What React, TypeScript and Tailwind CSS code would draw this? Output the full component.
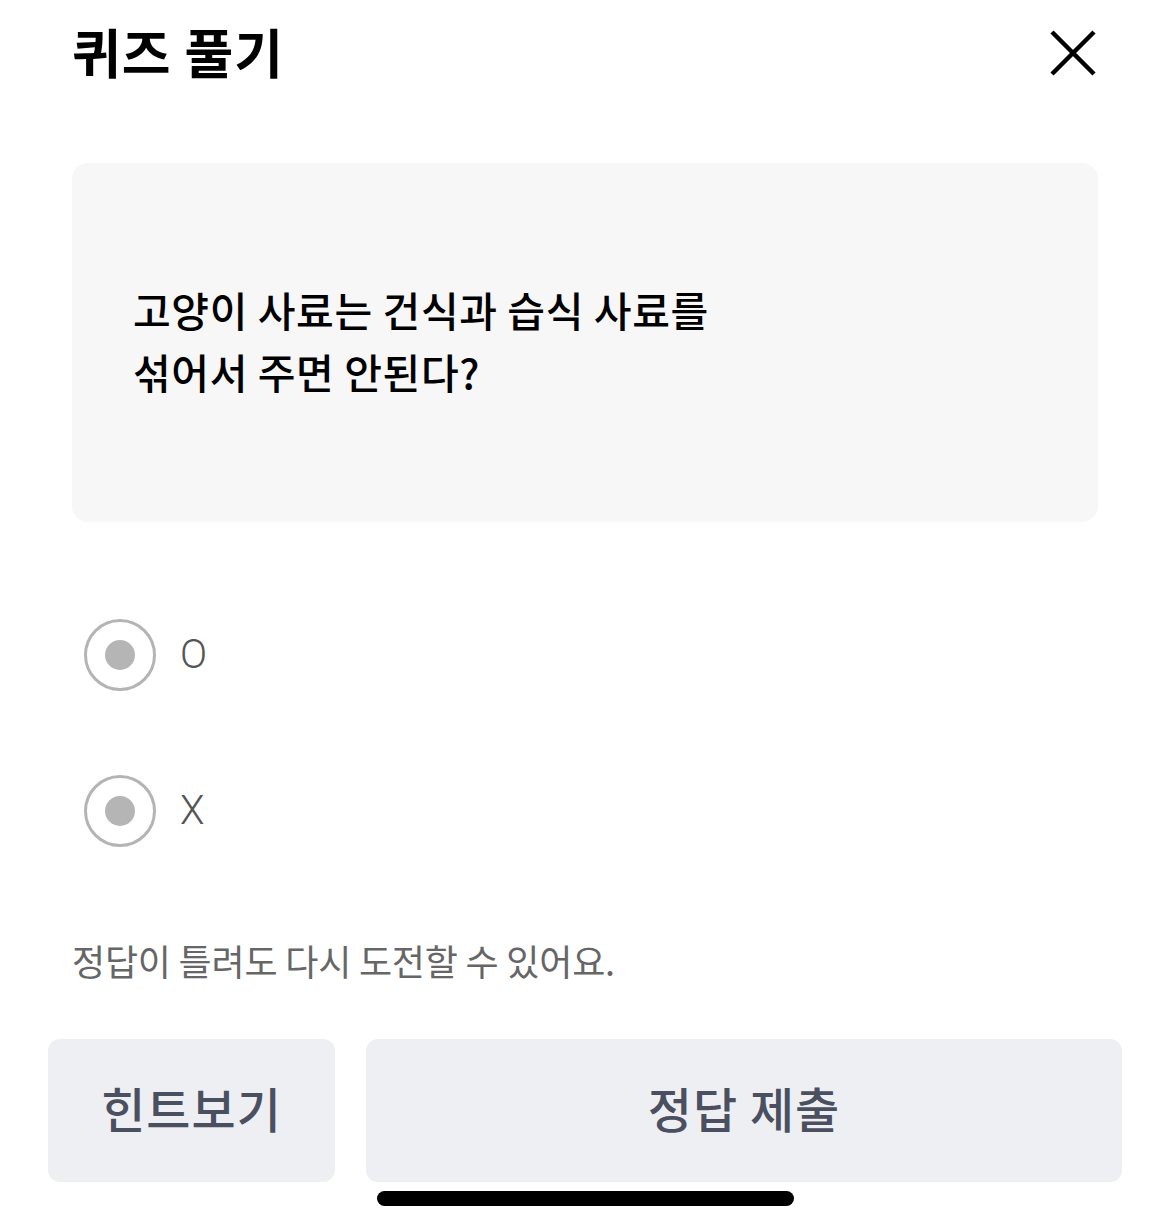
import React from "react";

const KR = { fontFamily: '"Noto Sans CJK KR", "Noto Sans", sans-serif' };
const RB = { fontFamily: 'Roboto, "Noto Sans", sans-serif' };

function Radio({ label }: { label: string }) {
  return (
    <div className="flex items-center h-[72px]">
      <div className="w-[72px] h-[72px] rounded-full border-[3px] border-[#b4b4b4] flex items-center justify-center">
        <div className="w-[30px] h-[30px] rounded-full bg-[#b5b5b5]" />
      </div>
      <span className="ml-[24px] text-[40px] text-[#555555] font-light leading-none" style={RB}>
        {label}
      </span>
    </div>
  );
}

export default function App() {
  return (
    <div className="w-[1170px] h-[1230px] bg-white relative overflow-hidden" style={KR}>
      <div className="flex items-center justify-between pl-[72px] pr-[72px] h-[102px]">
        <h1 className="text-[53px] font-bold text-black leading-none tracking-[1px]" style={KR}>퀴즈 풀기</h1>
        <svg width="48" height="48" viewBox="0 0 48 48" className="mr-[1px] mt-[4px]">
          <path d="M3 3 L45 45 M45 3 L3 45" stroke="#000" strokeWidth="4.5" strokeLinecap="butt" />
        </svg>
      </div>

      <div className="mx-[72px] mt-[61px] h-[359px] rounded-[16px] bg-[#f7f7f7] flex items-center pl-[61px] pb-[6px]">
        <p className="text-[41px] font-medium text-black leading-[62px] tracking-[0.6px]" style={KR}>
          고양이 사료는 건식과 습식 사료를
          <br />
          섞어서 주면 안된다?
        </p>
      </div>

      <div className="pl-[84px] mt-[97px] flex flex-col gap-[84px]">
        <Radio label="O" />
        <Radio label="X" />
      </div>

      <p className="pl-[72px] mt-[95px] text-[36px] text-[#666666] leading-none tracking-[-0.2px]" style={KR}>
        정답이 틀려도 다시 도전할 수 있어요.
      </p>

      <div className="flex gap-[31px] px-[48px] mt-[61px]">
        <button className="w-[287px] h-[143px] rounded-[12px] bg-[#eeeff3] text-[48px] font-medium text-[#4b5060] tracking-[1px] flex items-center justify-center pb-[8px]" style={KR}>
          힌트보기
        </button>
        <button className="flex-1 h-[143px] rounded-[12px] bg-[#eeeff3] text-[48px] font-medium text-[#4b5060] tracking-[1px] flex items-center justify-center pb-[8px]" style={KR}>
          정답 제출
        </button>
      </div>

      <div className="absolute left-[377px] top-[1191px] w-[417px] h-[15px] rounded-full bg-black" />
    </div>
  );
}
